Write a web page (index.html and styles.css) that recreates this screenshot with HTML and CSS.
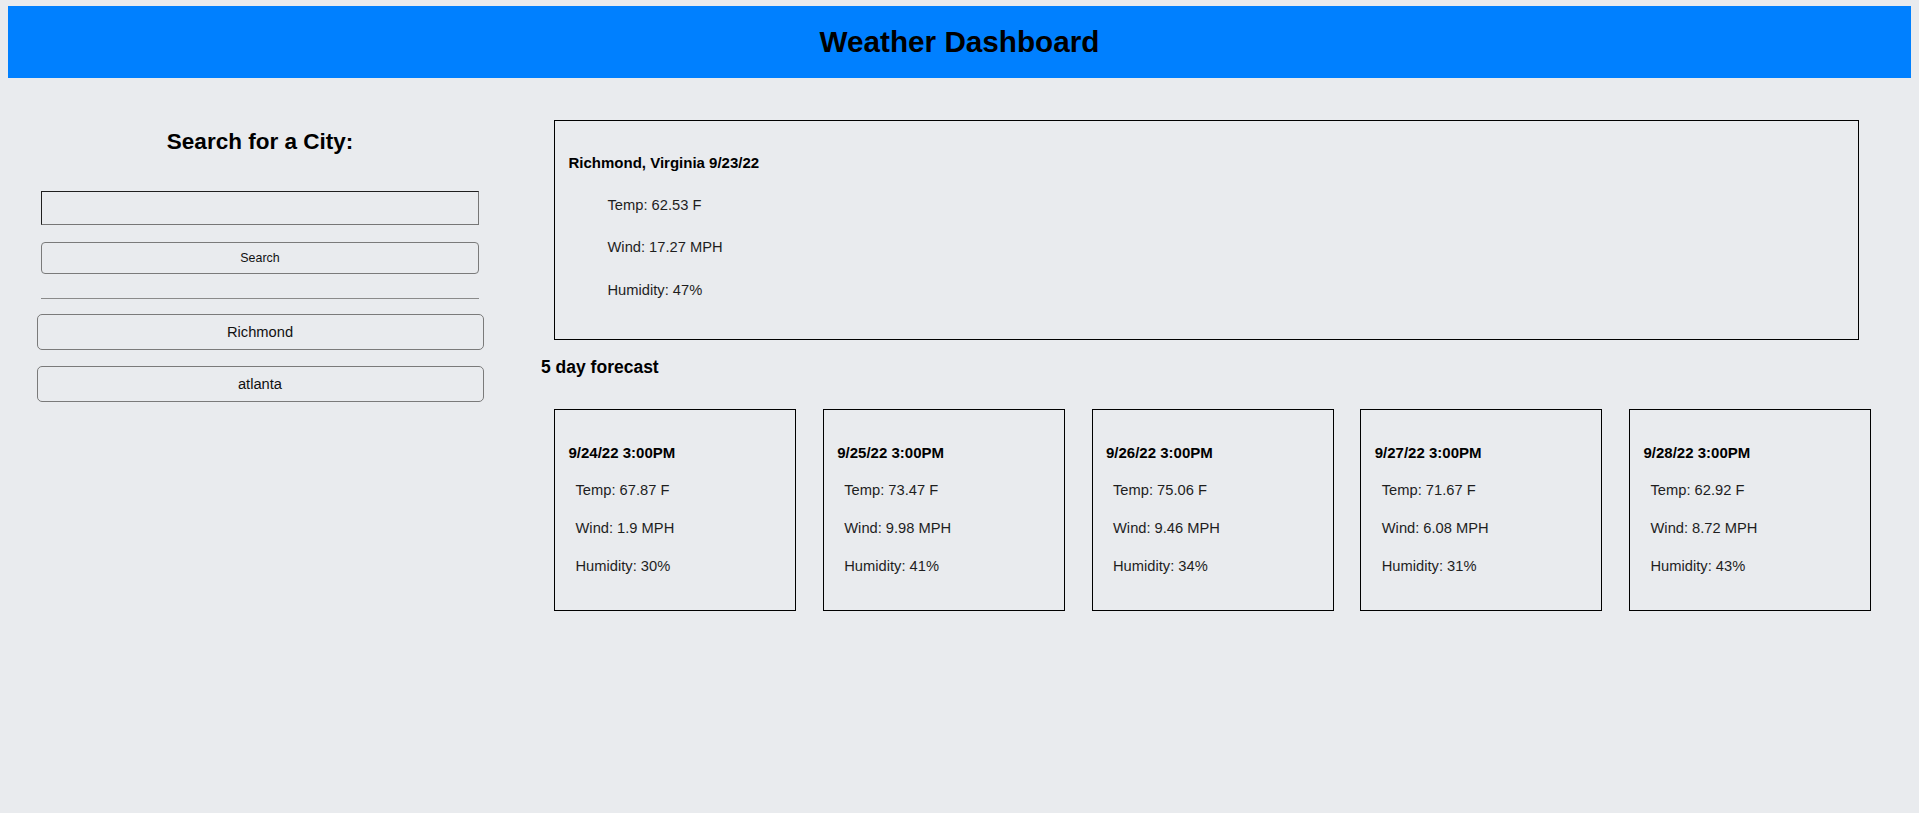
FILE: index.html
```html
<!DOCTYPE html>
<html lang="en">
<head>
<meta charset="utf-8">
<title>Weather Dashboard</title>
<link rel="stylesheet" href="styles.css">
</head>
<body>
<header class="topbar">
  <h1 class="app-title">Weather Dashboard</h1>
</header>
<main class="layout">
  <aside class="sidebar">
    <h2 class="search-heading">Search for a City:</h2>
    <input class="city-input" type="text" aria-label="City">
    <button class="search-btn" type="button">Search</button>
    <hr class="divider">
    <div class="history">
      <button class="history-btn" type="button">Richmond</button>
      <button class="history-btn" type="button">atlanta</button>
    </div>
  </aside>
  <section class="content">
    <div class="current">
      <h4 class="current-title">Richmond, Virginia 9/23/22</h4>
      <ul class="stats stats-current">
        <li>Temp: 62.53 F</li>
        <li>Wind: 17.27 MPH</li>
        <li>Humidity: 47%</li>
      </ul>
    </div>
    <h3 class="forecast-heading">5 day forecast</h3>
    <div class="forecast">
      <div class="card">
        <h4 class="card-title">9/24/22 3:00PM</h4>
        <ul class="stats stats-card">
          <li>Temp: 67.87 F</li>
          <li>Wind: 1.9 MPH</li>
          <li>Humidity: 30%</li>
        </ul>
      </div>
      <div class="card">
        <h4 class="card-title">9/25/22 3:00PM</h4>
        <ul class="stats stats-card">
          <li>Temp: 73.47 F</li>
          <li>Wind: 9.98 MPH</li>
          <li>Humidity: 41%</li>
        </ul>
      </div>
      <div class="card">
        <h4 class="card-title">9/26/22 3:00PM</h4>
        <ul class="stats stats-card">
          <li>Temp: 75.06 F</li>
          <li>Wind: 9.46 MPH</li>
          <li>Humidity: 34%</li>
        </ul>
      </div>
      <div class="card">
        <h4 class="card-title">9/27/22 3:00PM</h4>
        <ul class="stats stats-card">
          <li>Temp: 71.67 F</li>
          <li>Wind: 6.08 MPH</li>
          <li>Humidity: 31%</li>
        </ul>
      </div>
      <div class="card">
        <h4 class="card-title">9/28/22 3:00PM</h4>
        <ul class="stats stats-card">
          <li>Temp: 62.92 F</li>
          <li>Wind: 8.72 MPH</li>
          <li>Humidity: 43%</li>
        </ul>
      </div>
    </div>
  </section>
</main>
</body>
</html>
```

FILE: styles.css
```css
* {
  box-sizing: border-box;
}

html {
  background: #e9ebee;
}

body {
  margin: 0;
  padding: 6px 8px 0;
  background: #e9ebee;
  color: #000;
  font-family: "Liberation Sans", Arial, sans-serif;
}

.topbar {
  height: 72px;
  background: #0080ff;
  display: flex;
  align-items: center;
  justify-content: center;
}

.app-title {
  margin: 0;
  font-size: 29.7px;
  line-height: 34px;
  font-weight: 700;
  color: #000;
}

.layout {
  display: flex;
  align-items: flex-start;
}

.sidebar {
  flex: none;
  width: 504px;
  padding-top: 51px;
  display: flex;
  flex-direction: column;
  align-items: center;
}

.search-heading {
  margin: 0;
  font-size: 22.5px;
  line-height: 26px;
  font-weight: 700;
}

.city-input {
  margin-top: 36px;
  width: 438px;
  height: 34px;
  background: transparent;
  border-style: solid;
  border-width: 1px;
  border-color: #1f1f1f #767676 #767676 #1f1f1f;
  font-family: inherit;
  font-size: 14px;
  padding: 0 4px;
}

.search-btn {
  margin-top: 17px;
  width: 438px;
  height: 32px;
  background: transparent;
  border: 1px solid #7a7a7a;
  border-radius: 4px;
  font-family: inherit;
  font-size: 12.4px;
  color: #111;
  padding: 0;
}

.divider {
  margin: 24px 0 0;
  width: 438px;
  height: 0;
  border: 0;
  border-top: 1px solid #8a8a8a;
}

.history {
  margin-top: 15px;
  display: flex;
  flex-direction: column;
  gap: 16px;
}

.history-btn {
  width: 447px;
  height: 36px;
  background: transparent;
  border: 1px solid #7a7a7a;
  border-radius: 5px;
  font-family: inherit;
  font-size: 14.7px;
  color: #111;
  padding: 0;
}

.history-btn + .history-btn {
  height: 35.5px;
}

.content {
  flex: 1;
  padding: 42px 0 0 29px;
}

.current {
  margin: 0 52px 0 13px;
  border: 1px solid #000;
  padding: 32px 13.5px 39px;
}

.current-title,
.card-title {
  margin: 0;
  font-size: 15px;
  line-height: 20px;
  font-weight: 700;
  color: #000;
}

.current-title {
  margin-bottom: 21.8px;
}

.card-title {
  margin-bottom: 17.5px;
}

.stats {
  margin: 0;
  list-style: none;
  font-size: 14.7px;
  line-height: 20px;
  color: #1e1e1e;
}

.stats-current {
  padding-left: 39px;
}

.stats-current li + li {
  margin-top: 22.5px;
}

.stats-card {
  padding-left: 7px;
}

.stats-card li + li {
  margin-top: 17.6px;
}

.forecast-heading {
  margin: 16px 0 0;
  font-size: 17.5px;
  line-height: 22px;
  font-weight: 700;
}

.forecast {
  margin: 31.2px 0 0 13px;
  display: flex;
  gap: 26.75px;
}

.card {
  flex: none;
  width: 242px;
  border: 1px solid #000;
  padding: 33px 13.5px 34px;
}
```
